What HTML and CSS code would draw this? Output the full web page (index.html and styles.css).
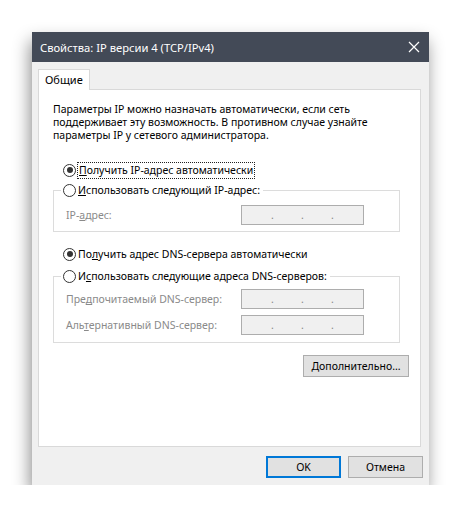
FILE: index.html
```html
<!DOCTYPE html>
<html lang="ru">
<head>
  <meta charset="UTF-8" />
  <title>Свойства: IP версии 4 (TCP/IPv4)</title>
  <link rel="stylesheet" href="styles.css">
</head>
<body>
  <div class="window">
    <div class="titlebar">
      <span class="title">Свойства: IP версии 4 (TCP/IPv4)</span>
      <svg class="close" width="12" height="12" viewBox="0 0 12 12" aria-label="Закрыть">
        <path d="M1 1 L11 11 M11 1 L1 11" stroke="#fff" stroke-width="1.2" fill="none"/>
      </svg>
    </div>

    <div class="body">
      <div class="tabs">
        <div class="tab">Общие</div>
      </div>

      <div class="panel">
        <p class="intro">Параметры IP можно назначать автоматически, если сеть поддерживает эту возможность. В противном случае узнайте параметры IP у сетевого администратора.</p>

        <label class="radio-row first">
          <span class="radio checked"></span>
          <span class="focus"><u>П</u>олучить IP-адрес автоматически</span>
        </label>

        <fieldset class="group">
          <legend>
            <label class="radio-row">
              <span class="radio"></span>
              <span><u>И</u>спользовать следующий IP-адрес:</span>
            </label>
          </legend>
          <div class="field">
            <span class="field-label">IP-<u>а</u>дрес:</span>
            <span class="ip"><i>.</i><i>.</i><i>.</i></span>
          </div>
        </fieldset>

        <label class="radio-row dns">
          <span class="radio checked"></span>
          <span>По<u>л</u>учить адрес DNS-сервера автоматически</span>
        </label>

        <fieldset class="group dns-group">
          <legend>
            <label class="radio-row">
              <span class="radio"></span>
              <span>И<u>с</u>пользовать следующие адреса DNS-серверов:</span>
            </label>
          </legend>
          <div class="field">
            <span class="field-label">Пре<u>д</u>почитаемый DNS-сервер:</span>
            <span class="ip"><i>.</i><i>.</i><i>.</i></span>
          </div>
          <div class="field">
            <span class="field-label">Аль<u>т</u>ернативный DNS-сервер:</span>
            <span class="ip"><i>.</i><i>.</i><i>.</i></span>
          </div>
        </fieldset>

        <div class="advanced-row">
          <button class="btn advanced" type="button"><u>Д</u>ополнительно...</button>
        </div>
      </div>

      <div class="footer">
        <button class="btn default" type="button">OK</button>
        <button class="btn" type="button">Отмена</button>
      </div>
    </div>
  </div>
</body>
</html>
```

FILE: styles.css
```css
body {
  margin: 0;
  background: #fff;
  font-family: "Noto Sans", "Open Sans", sans-serif;
  font-size: 10.5px;
  color: #000;
}
.window {
  margin: 32px 0 0 32px;
  width: 397px;
  height: 453px;
  background: #f0f0f0;
  display: flex;
  flex-direction: column;
  box-shadow: -2px 9px 16px rgba(0, 0, 0, 0.45);
}
.titlebar {
  height: 30px;
  flex: none;
  background: #434a57;
  color: #fff;
  display: flex;
  align-items: center;
  padding: 0 9px 0 8px;
  font-size: 11.2px;
}
.title {
  flex: 1;
}
.close {
  display: block;
}
.body {
  flex: 1;
  display: flex;
  flex-direction: column;
  padding: 7px 8px 0 6px;
}
.tabs {
  display: flex;
  height: 20px;
}
.tab {
  position: relative;
  background: #fff;
  border: 1px solid #d9d9d9;
  border-bottom: none;
  height: 20px;
  margin-bottom: -1px;
  padding: 0 6px;
  line-height: 19px;
  font-size: 11px;
}
.panel {
  flex: 1;
  background: #fff;
  border: 1px solid #d9d9d9;
  padding: 13px 10px 0 0;
}
.intro {
  margin: 0 0 20px 14px;
  line-height: 13px;
}
.radio-row {
  display: flex;
  align-items: center;
  height: 16px;
  gap: 2px;
  white-space: nowrap;
}
.radio-row.first {
  margin-left: 24px;
}
.radio {
  width: 11px;
  height: 11px;
  border: 1px solid #333;
  border-radius: 50%;
  display: flex;
  align-items: center;
  justify-content: center;
  flex: none;
  background: #fff;
}
.radio.checked::after {
  content: "";
  width: 6px;
  height: 6px;
  border-radius: 50%;
  background: #333;
}
.focus {
  outline: 1px dotted #222;
  padding: 0 1px;
  line-height: 15px;
}
.group {
  margin: 4px 10px 0 14px;
  border: 1px solid #dcdcdc;
  padding: 7px 0 6px 7px;
  min-width: 0;
}
.group legend {
  padding: 0 2px;
  margin-left: 0;
}
.group legend .radio-row {
  padding-right: 1px;
}
.field {
  display: flex;
  align-items: center;
  height: 20px;
  padding-left: 5px;
  color: #8a8a8a;
}
.field + .field {
  margin-top: 6px;
}
.field-label {
  width: 175px;
}
.ip {
  border: 1px solid #adadad;
  background: #f0f0f0;
  display: flex;
  padding-left: 29px;
  box-sizing: border-box;
  width: 123px;
  height: 20px;
  align-items: center;
}
.ip i {
  font-style: normal;
  width: 30px;
  color: #8a8a8a;
  line-height: 14px;
}
.dns {
  margin: 14px 0 0 24px;
}
.dns-group {
  margin-top: 6px;
  padding: 5px 0 7px 7px;
}
.advanced-row {
  display: flex;
  justify-content: flex-end;
  margin-top: 12px;
  padding-right: 1px;
}
.btn {
  font: inherit;
  color: #000;
  background: #e1e1e1;
  border: 1px solid #adadad;
  height: 22px;
  padding: 0;
  border-radius: 0;
}
.advanced {
  width: 106px;
}
.footer {
  flex: none;
  display: flex;
  justify-content: flex-end;
  gap: 7px;
  padding: 9px 0 7px;
  margin-right: -2px;
}
.footer .btn {
  width: 75px;
}
.btn.default {
  border-color: #0078d7;
  box-shadow: inset 0 0 0 1px #0078d7;
}
```
